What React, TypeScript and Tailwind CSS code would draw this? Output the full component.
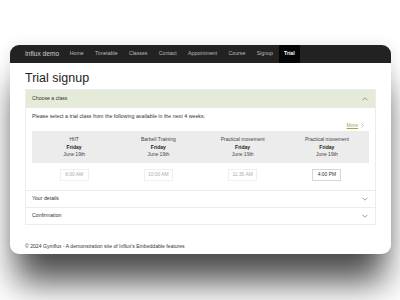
const navItems = ['Home', 'Timetable', 'Classes', 'Contact', 'Appointment', 'Course', 'Signup']

const classes = [
  { name: 'HIIT', day: 'Friday', date: 'June 19th', time: '6:00 AM', open: false },
  { name: 'Barbell Training', day: 'Friday', date: 'June 19th', time: '10:00 AM', open: false },
  { name: 'Practical movement', day: 'Friday', date: 'June 19th', time: '11:30 AM', open: false },
  { name: 'Practical movement', day: 'Friday', date: 'June 19th', time: '4:00 PM', open: true },
]

function Chevron({ up = false }: { up?: boolean }) {
  return (
    <svg width="6" height="4" viewBox="0 0 6 4" fill="none" className="text-[#777]">
      <path d={up ? 'M0.5 3.3L3 0.8L5.5 3.3' : 'M0.5 0.7L3 3.2L5.5 0.7'} stroke="currentColor" strokeWidth="0.7" />
    </svg>
  )
}

function Section({ title }: { title: string }) {
  return (
    <div className="h-[17px] border-t border-[#ececec] px-[6px] flex items-center justify-between text-[5.2px] text-[#333]">
      <span>{title}</span>
      <span className="mr-[1px]"><Chevron /></span>
    </div>
  )
}

export default function App() {
  return (
    <div
      className="w-[400px] h-[300px] overflow-hidden bg-white pt-[45px]"
      style={{ fontFamily: '"Liberation Sans", Arial, sans-serif' }}
    >
      <div className="ml-[10px] w-[381px] h-[209px] bg-white rounded-[9px] overflow-hidden shadow-[0_34px_34px_-6px_rgba(0,0,0,0.7),0_0_14px_rgba(0,0,0,0.1)] flex flex-col">
        <nav className="h-[18px] bg-[#222] px-[15px] flex items-stretch shrink-0">
          <span className="text-[6.6px] text-[#cfcfcf] flex items-center mr-[5px]">Influx demo</span>
          {navItems.map((item) => (
            <span key={item} className="px-[5.7px] flex items-center text-[5.2px] text-[#bbb]">
              {item}
            </span>
          ))}
          <span className="px-[5.5px] flex items-center text-[5.2px] text-white font-bold bg-[#050505]">Trial</span>
        </nav>

        <div className="px-[15px] flex-1 flex flex-col">
          <h1 className="text-[12.5px] leading-[14px] text-[#222] font-medium mt-[8px] mb-[4px]">Trial signup</h1>

          <div className="border border-[#ececec]">
            <div className="h-[18px] bg-[#e4ebd9] px-[6px] flex items-center justify-between text-[5.2px] text-[#333]">
              <span>Choose a class</span>
              <span className="mr-[1px]"><Chevron up /></span>
            </div>

            <div className="px-[6px] pt-[5px] pb-[9px]">
              <p className="text-[5.3px] leading-[7px] text-[#333]">
                Please select a trial class from the following available in the next 4 weeks:
              </p>
              <div className="flex justify-end items-center gap-[3px] mt-[2px] mr-[5px] text-[5px] leading-[7px] text-[#9aa75a]">
                <span className="underline">More</span>
                <svg width="3" height="5" viewBox="0 0 3 5" fill="none" className="text-[#999]">
                  <path d="M0.5 0.5L2.5 2.5L0.5 4.5" stroke="currentColor" strokeWidth="0.6" />
                </svg>
              </div>

              <div className="mt-[2px] grid grid-cols-4 bg-[#ececec] pt-[5px] pb-[4px] text-[5px] leading-[7.5px] text-[#444] text-center">
                {classes.map((c, i) => (
                  <div key={i}>
                    <div>{c.name}</div>
                    <div className="font-bold text-[#222]">{c.day}</div>
                    <div>{c.date}</div>
                  </div>
                ))}
              </div>

              <div className="grid grid-cols-4 mt-[6px]">
                {classes.map((c, i) => (
                  <div key={i} className="flex justify-center">
                    <span
                      className={`h-[12px] w-[29px] flex items-center justify-center border text-[4.9px] ${
                        c.open ? 'border-[#d6d6d6] text-[#333]' : 'border-[#efefef] text-[#aaa]'
                      }`}
                    >
                      {c.time}
                    </span>
                  </div>
                ))}
              </div>
            </div>

            <Section title="Your details" />
            <Section title="Confirmation" />
          </div>

          <p className="mt-[18px] text-[5.1px] text-[#333]">
            © 2024 Gymflux - A demonstration site of Influx's Embeddable features
          </p>
        </div>
      </div>
    </div>
  )
}
